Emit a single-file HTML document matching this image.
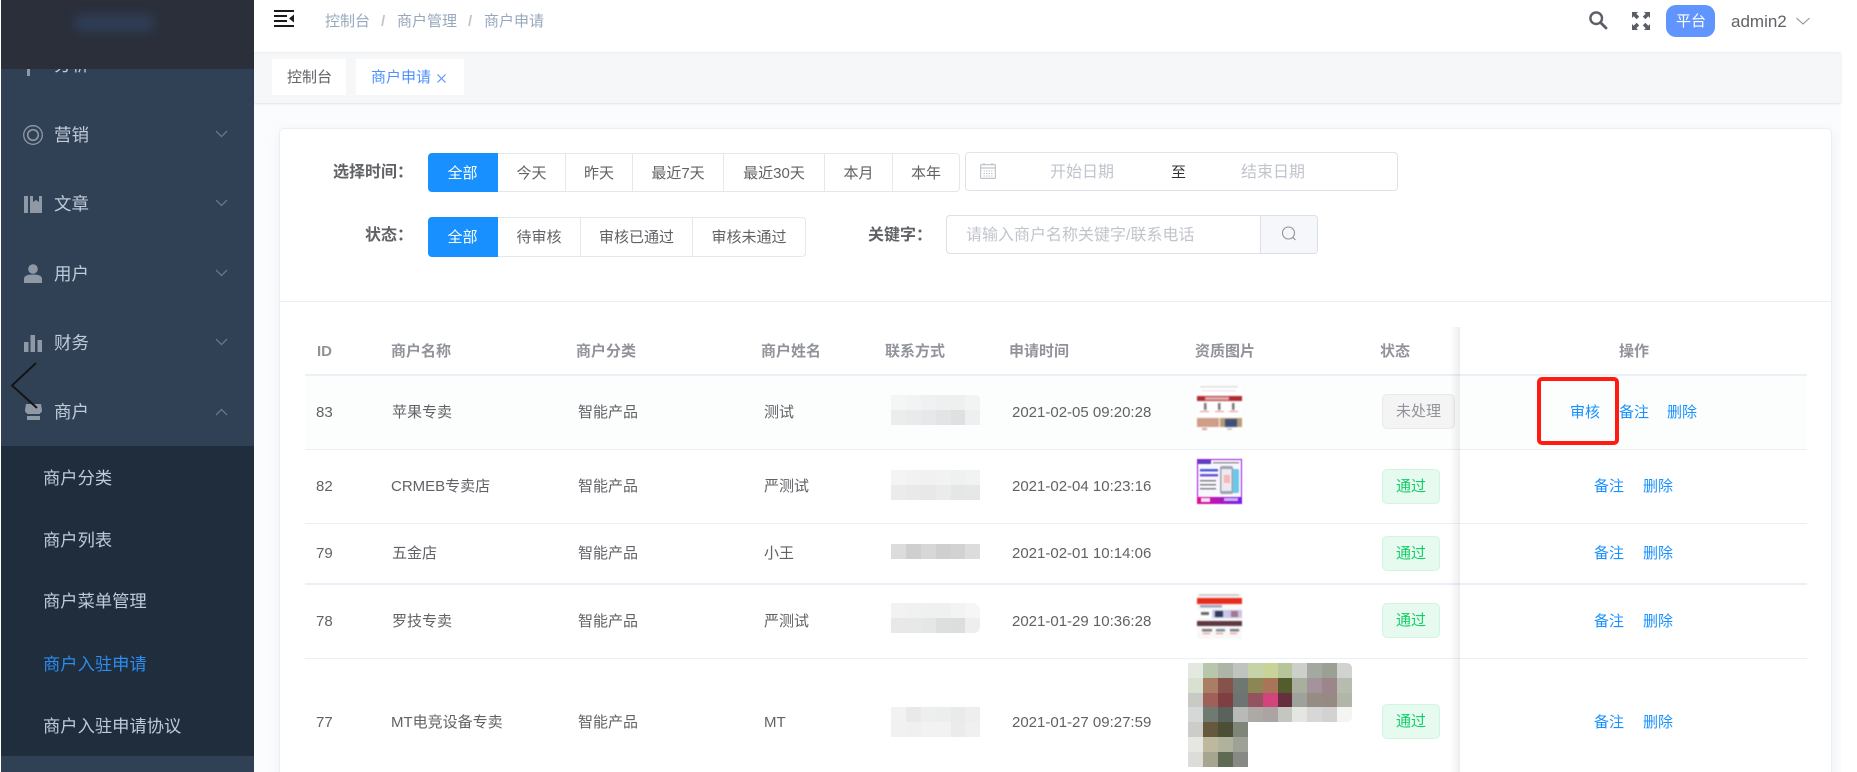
<!DOCTYPE html>
<html lang="zh-CN">
<head>
<meta charset="utf-8">
<title>商户申请</title>
<style>
*{box-sizing:border-box}
html,body{margin:0;padding:0;width:1857px;height:772px;overflow:hidden;background:#fff}
body{font-family:"Liberation Sans","Noto Sans CJK SC",sans-serif;position:relative;font-size:15px;color:#606266}
.a{position:absolute}
.t{position:absolute;white-space:nowrap;line-height:20px;height:20px;filter:blur(.3px)}
.side{left:1px;top:0;width:253px;height:772px;background:#304156;overflow:hidden}
.m{font-size:17.5px;color:#bfcbd9;left:53px}
.s{font-size:17.3px;color:#bfcbd9;left:42px}
.h{font-weight:bold;color:#909399;font-size:15px;top:342px}
.c{color:#606266;font-size:15px}
.line{position:absolute;left:305px;width:1502px;height:1px;background:#ebeff6}
.btn{position:absolute;border:1px solid #e4e7ed;background:#fff;color:#606266;text-align:center;font-size:15px;line-height:39px;height:39px;border-left:0;filter:blur(.2px)}
.act{background:#1890ff;color:#fff;border-color:#1890ff;border-radius:4px 0 0 4px}
.lb{font-weight:bold;color:#606266;font-size:16px}
.tag{position:absolute;border-radius:5px;font-size:15px;text-align:center;filter:blur(.2px)}
.g{background:#e7faf0;border:1px solid #d0f5e0;color:#13ce66;left:1382px;width:58px;height:35px;line-height:34px}
.l{color:#1890ff;font-size:15px}
svg{position:absolute;overflow:visible}
.mos rect{width:15px;height:15px}
</style>
</head>
<body>

<!-- Content background -->
<div class="a" style="left:254px;top:103px;width:1587px;height:669px;background:#fbfcfd"></div>

<!-- Sidebar -->
<div class="a side">
  <div class="t m" style="top:55px;left:53px">分析</div>
  <div class="a" style="left:26px;top:66px;width:3px;height:10px;background:#8f98a5"></div>

  <div class="t m" style="top:125px">营销</div>
  <div class="t m" style="top:194px">文章</div>
  <div class="t m" style="top:264px">用户</div>
  <div class="t m" style="top:333px">财务</div>
  <div class="t m" style="top:402px">商户</div>

  <svg style="left:0;top:0" width="253" height="772" viewBox="0 0 253 772">
    <g fill="none" stroke="#6d7c8e" stroke-width="1.2" transform="translate(0 1)">
      <path d="M215 130l5.500 5.500 5.500-5.500"/>
      <path d="M215 199l5.500 5.500 5.500-5.500"/>
      <path d="M215 269l5.500 5.500 5.500-5.500"/>
      <path d="M215 338l5.500 5.500 5.500-5.500"/>
      <path d="M215 414l5.500-5.500 5.500 5.500"/>
    </g>
    <g fill="none" stroke="#8f98a5">
      <circle cx="32" cy="135" r="9.300" stroke-width="1.300"/>
      <circle cx="32" cy="135" r="5.300" stroke-width="1.600"/>
    </g>
    <g fill="#8f98a5">
      <rect x="23" y="196" width="4" height="17"/>
      <path d="M29 196h3v6l3-2 3 2v-6h3v17H29z"/>
      <circle cx="32" cy="269" r="4.800"/>
      <path d="M23 283v-4c0-3 3-4.500 9-4.500s9 1.500 9 4.500v4z"/>
      <rect x="23" y="342" width="4.500" height="10"/>
      <rect x="29.500" y="335" width="4.500" height="17"/>
      <rect x="36.500" y="340" width="4.500" height="12"/>
      <path d="M25 404h15l1 6c0 2-1 3-2 3v7H26v-7c-1 0-2-1-2-3z"/>
    </g>
    <rect x="26" y="414" width="13" height="2" fill="#304156"/>
  </svg>

  <!-- submenu -->
  <div class="a" style="left:0;top:446px;width:253px;height:310px;background:#1f2d3d"></div>
  <div class="t s" style="top:468px">商户分类</div>
  <div class="t s" style="top:530px">商户列表</div>
  <div class="t s" style="top:591px">商户菜单管理</div>
  <div class="t s" style="top:654px;color:#2d8cf0">商户入驻申请</div>
  <div class="t s" style="top:716px">商户入驻申请协议</div>

  <!-- logo header -->
  <div class="a" style="left:0;top:0;width:253px;height:69px;background:#2a2f3a"></div>
  <div class="a" style="left:72px;top:14px;width:82px;height:18px;background:#2e3d54;filter:blur(5px);border-radius:8px"></div>
</div>

<!-- Top header -->
<div class="a" style="left:254px;top:0;width:1587px;height:52px;background:#fff"></div>
<svg style="left:274px;top:10px" width="20" height="17" viewBox="0 0 20 17">
  <g fill="#1a1a1a">
    <rect x="0" y="0" width="20" height="2"/>
    <rect x="0" y="5" width="13" height="2"/>
    <rect x="0" y="10" width="13" height="2"/>
    <rect x="0" y="15" width="20" height="2"/>
    <path d="M20 4.500v8l-5-4z"/>
  </g>
</svg>
<div class="t" style="left:325px;top:12px;color:#97a8be">控制台</div>
<div class="t" style="left:381px;top:12px;color:#c0c4cc;font-weight:bold">/</div>
<div class="t" style="left:397px;top:12px;color:#97a8be">商户管理</div>
<div class="t" style="left:468px;top:12px;color:#c0c4cc;font-weight:bold">/</div>
<div class="t" style="left:484px;top:12px;color:#97a8be">商户申请</div>

<svg style="left:1589px;top:11px" width="18" height="18" viewBox="0 0 18 18">
  <circle cx="7.200" cy="7.200" r="5.800" fill="none" stroke="#5a5e66" stroke-width="2.400"/>
  <path d="M11.500 11.500L17 17" stroke="#5a5e66" stroke-width="2.800" stroke-linecap="round"/>
</svg>
<svg style="left:1632px;top:12px" width="18" height="18" viewBox="0 0 18 18">
  <g fill="#5a5e66" stroke="none">
    <path d="M0 0h6L4.300 1.700l2.900 2.900-2.600 2.600-2.900-2.900L0 6z"/>
    <path d="M18 0h-6l1.700 1.700-2.900 2.900 2.600 2.600 2.900-2.900L18 6z"/>
    <path d="M0 18h6l-1.700-1.700 2.900-2.900-2.600-2.600-2.900 2.900L0 12z"/>
    <path d="M18 18h-6l1.700-1.700-2.900-2.900 2.600-2.600 2.900 2.900L18 12z"/>
  </g>
</svg>
<div class="a" style="left:1666px;top:5px;width:49px;height:32px;background:#6094ff;border-radius:10px"></div>
<div class="t" style="left:1676px;top:12px;color:#fff">平台</div>
<div class="t" style="left:1731px;top:12px;font-size:17px;color:#606266">admin2</div>
<svg style="left:1796px;top:17px" width="14" height="8" viewBox="0 0 14 8">
  <path d="M.5 1L7 7l6.500-6" fill="none" stroke="#909399" stroke-width="1.100"/>
</svg>

<!-- Tabs bar -->
<div class="a" style="left:254px;top:52px;width:1587px;height:51px;background:#f5f7f9;box-shadow:0 1px 2px rgba(0,0,0,.1),inset 0 2px 2px -1px rgba(0,0,0,.04)"></div>
<div class="a" style="left:272px;top:59px;width:74px;height:36px;background:#fff"></div>
<div class="t" style="left:287px;top:68px;color:#606266">控制台</div>
<div class="a" style="left:356px;top:59px;width:108px;height:36px;background:#fff"></div>
<div class="t" style="left:371px;top:68px;color:#4f8fff">商户申请</div>
<svg style="left:437px;top:74px" width="9" height="9" viewBox="0 0 9 9">
  <path d="M.5.5l8 8M8.500.5l-8 8" stroke="#4f8fff" stroke-width="1"/>
</svg>

<!-- Card -->
<div class="a" style="left:279px;top:128px;width:1553px;height:660px;background:#fff;border:1px solid #ebeef5;border-radius:5px;box-shadow:0 2px 12px rgba(0,0,0,.05)"></div>

<!-- Filters row 1 -->
<div class="t lb" style="left:333px;top:163px">选择时间：</div>
<div class="btn act" style="left:428px;top:153px;width:70px">全部</div>
<div class="btn" style="left:498px;top:153px;width:68px">今天</div>
<div class="btn" style="left:566px;top:153px;width:67px">昨天</div>
<div class="btn" style="left:633px;top:153px;width:91px">最近7天</div>
<div class="btn" style="left:724px;top:153px;width:101px">最近30天</div>
<div class="btn" style="left:825px;top:153px;width:68px">本月</div>
<div class="btn" style="left:893px;top:153px;width:67px;border-radius:0 4px 4px 0">本年</div>

<div class="a" style="left:965px;top:152px;width:433px;height:39px;border:1px solid #e0e3ea;border-radius:4px;background:#fff"></div>
<svg style="left:980px;top:163px" width="16" height="16" viewBox="0 0 16 16">
  <g fill="none" stroke="#c0c4cc" stroke-width="1.200">
    <rect x=".6" y="1.600" width="14.800" height="13.800" rx="1"/>
    <path d="M.6 5h14.800M4 0v2.500M12 0v2.500"/>
    <path d="M3.500 8h9M3.500 10.500h9M3.500 13h9" stroke-dasharray="1.500 1" stroke-width="1"/>
  </g>
</svg>
<div class="t" style="left:1050px;top:163px;font-size:16px;color:#c0c4cc">开始日期</div>
<div class="t" style="left:1171px;top:163px;color:#303133">至</div>
<div class="t" style="left:1241px;top:163px;font-size:16px;color:#c0c4cc">结束日期</div>

<!-- Filters row 2 -->
<div class="t lb" style="left:365px;top:226px">状态：</div>
<div class="btn act" style="left:428px;top:217px;width:70px;height:40px;line-height:39px">全部</div>
<div class="btn" style="left:498px;top:217px;width:83px;height:40px;line-height:39px">待审核</div>
<div class="btn" style="left:581px;top:217px;width:112px;height:40px;line-height:39px">审核已通过</div>
<div class="btn" style="left:693px;top:217px;width:113px;height:40px;line-height:39px;border-radius:0 4px 4px 0">审核未通过</div>

<div class="t lb" style="left:868px;top:226px">关键字：</div>
<div class="a" style="left:946px;top:215px;width:372px;height:39px;border:1px solid #dcdfe6;border-radius:4px;background:#fff"></div>
<div class="a" style="left:1260px;top:216px;width:57px;height:37px;background:#f5f7fa;border-left:1px solid #dcdfe6;border-radius:0 3px 3px 0"></div>
<div class="t" style="left:966px;top:226px;font-size:16px;color:#c0c4cc">请输入商户名称关键字/联系电话</div>
<svg style="left:1281px;top:226px" width="16" height="16" viewBox="0 0 16 16">
  <circle cx="7.500" cy="7" r="6" fill="none" stroke="#8f939a" stroke-width="1.100"/>
  <path d="M11.800 11.300l2.700 2.700" stroke="#8f939a" stroke-width="1.100"/>
</svg>

<div class="a" style="left:280px;top:301px;width:1551px;height:1px;background:#ebeef5"></div>

<!-- Table -->
<div class="a" style="left:305px;top:375px;width:1502px;height:74px;background:#fcfefe"></div>
<div class="t h" style="left:317px">ID</div>
<div class="t h" style="left:391px">商户名称</div>
<div class="t h" style="left:576px">商户分类</div>
<div class="t h" style="left:761px">商户姓名</div>
<div class="t h" style="left:885px">联系方式</div>
<div class="t h" style="left:1009px">申请时间</div>
<div class="t h" style="left:1195px">资质图片</div>
<div class="t h" style="left:1380px">状态</div>
<div class="t h" style="left:1619px">操作</div>

<div class="line" style="top:374px;height:2px"></div>
<div class="line" style="top:449px"></div>
<div class="line" style="top:523px"></div>
<div class="line" style="top:583px;height:2px"></div>
<div class="line" style="top:658px"></div>

<!-- Rows -->
<div class="t c" style="left:316px;top:403px">83</div>
<div class="t c" style="left:392px;top:403px">苹果专卖</div>
<div class="t c" style="left:578px;top:403px">智能产品</div>
<div class="t c" style="left:764px;top:403px">测试</div>
<div class="t c" style="left:1012px;top:403px">2021-02-05 09:20:28</div>

<div class="t c" style="left:316px;top:477px">82</div>
<div class="t c" style="left:391px;top:477px">CRMEB专卖店</div>
<div class="t c" style="left:578px;top:477px">智能产品</div>
<div class="t c" style="left:764px;top:477px">严测试</div>
<div class="t c" style="left:1012px;top:477px">2021-02-04 10:23:16</div>

<div class="t c" style="left:316px;top:544px">79</div>
<div class="t c" style="left:392px;top:544px">五金店</div>
<div class="t c" style="left:578px;top:544px">智能产品</div>
<div class="t c" style="left:764px;top:544px">小王</div>
<div class="t c" style="left:1012px;top:544px">2021-02-01 10:14:06</div>

<div class="t c" style="left:316px;top:612px">78</div>
<div class="t c" style="left:392px;top:612px">罗技专卖</div>
<div class="t c" style="left:578px;top:612px">智能产品</div>
<div class="t c" style="left:764px;top:612px">严测试</div>
<div class="t c" style="left:1012px;top:612px">2021-01-29 10:36:28</div>

<div class="t c" style="left:316px;top:713px">77</div>
<div class="t c" style="left:391px;top:713px">MT电竞设备专卖</div>
<div class="t c" style="left:578px;top:713px">智能产品</div>
<div class="t c" style="left:764px;top:713px">MT</div>
<div class="t c" style="left:1012px;top:713px">2021-01-27 09:27:59</div>

<!-- Blurred phone numbers -->
<svg class="mos" style="left:0;top:0" width="1857" height="772" viewBox="0 0 1857 772">
  <g>
    <rect x="891" y="395" fill="#f4f5f5"/><rect x="906" y="395" fill="#f2f3f3"/><rect x="921" y="395" fill="#f0f1f2"/><rect x="936" y="395" fill="#eef0f0"/><rect x="951" y="395" fill="#eef0f0"/><path d="M965 395h10q5 0 5 5v10h-15z" fill="#f2f3f3"/>
    <rect x="891" y="410" fill="#ebecec"/><rect x="906" y="410" fill="#e9eaeb"/><rect x="921" y="410" fill="#e7e8e9"/><rect x="936" y="410" fill="#e3e4e5"/><rect x="951" y="410" fill="#dfe0e1"/><rect x="965" y="410" fill="#eeeff0"/>

    <rect x="891" y="470" fill="#f4f4f5"/><rect x="906" y="470" fill="#f1f2f2"/><rect x="921" y="470" fill="#f1f1f2"/><rect x="936" y="470" fill="#f1f2f3"/><rect x="951" y="470" fill="#eff0f0"/><rect x="965" y="470" fill="#f1f2f2"/>
    <rect x="891" y="485" fill="#ebebeb"/><rect x="906" y="485" fill="#e9e9e9"/><rect x="921" y="485" fill="#e8e8e8"/><rect x="936" y="485" fill="#ebebeb"/><rect x="951" y="485" fill="#e5e6e6"/><rect x="965" y="485" fill="#e7e7e7"/>

    <rect x="891" y="544" fill="#dcdcdc"/><rect x="906" y="544" fill="#cfcfcf"/><rect x="921" y="544" fill="#d7d7d7"/><rect x="936" y="544" fill="#cfcfcf"/><rect x="951" y="544" fill="#d2d2d2"/><rect x="965" y="544" fill="#dcdcdc"/>

    <rect x="891" y="603" fill="#f2f2f3"/><rect x="906" y="603" fill="#f1f1f2"/><rect x="921" y="603" fill="#eff0f0"/><rect x="936" y="603" fill="#eff0f0"/><rect x="951" y="603" fill="#f3f3f4"/><path d="M965 603h6q9 0 9 9v6h-15z" fill="#f6f6f7"/>
    <rect x="891" y="618" fill="#e8e8e9"/><rect x="906" y="618" fill="#e7e8e8"/><rect x="921" y="618" fill="#e5e6e6"/><rect x="936" y="618" fill="#dddedf"/><rect x="951" y="618" fill="#dcdddd"/><path d="M965 618h15v7q0 8-6 8h-9z" fill="#eeeeef"/>

    <rect x="891" y="707" fill="#f2f2f3"/><rect x="906" y="707" fill="#e9e9ea"/><rect x="921" y="707" fill="#edeeee"/><rect x="936" y="707" fill="#ecedee"/><rect x="951" y="707" fill="#e9eaea"/><rect x="965" y="707" fill="#eeeeef"/>
    <rect x="891" y="722" fill="#f1f1f1"/><rect x="906" y="722" fill="#f0f0f0"/><rect x="921" y="722" fill="#f2f2f2"/><rect x="936" y="722" fill="#f2f2f2"/><rect x="951" y="722" fill="#ebebeb"/><rect x="965" y="722" fill="#f0f0f0"/>
  </g>

  <!-- Big mosaic -->
  <g>
    <rect x="1188" y="663" fill="#e3e8e0"/><rect x="1203" y="663" fill="#b8c6ab"/><rect x="1218" y="663" fill="#adb5a6"/><rect x="1233" y="663" fill="#c0c4bf"/><rect x="1248" y="663" fill="#c6d2a8"/><rect x="1263" y="663" fill="#c8d398"/><rect x="1278" y="663" fill="#b6c59a"/><rect x="1292" y="663" fill="#cccfca"/><rect x="1307" y="663" fill="#a3a8a0"/><rect x="1322" y="663" fill="#9aa194"/><path d="M1337 663h9q6 0 6 6v9h-15z" fill="#d0d3cf"/>
    <rect x="1188" y="678" fill="#d8e0d0"/><rect x="1203" y="678" fill="#a97e64"/><rect x="1218" y="678" fill="#86524c"/><rect x="1233" y="678" fill="#6e7770"/><rect x="1248" y="678" fill="#8c8655"/><rect x="1263" y="678" fill="#a87558"/><rect x="1278" y="678" fill="#535c2c"/><rect x="1292" y="678" fill="#a8af9c"/><rect x="1307" y="678" fill="#a4939a"/><rect x="1322" y="678" fill="#9c868c"/><rect x="1337" y="678" fill="#b6bcb0"/>
    <rect x="1188" y="693" fill="#c8cac6"/><rect x="1203" y="693" fill="#9e6058"/><rect x="1218" y="693" fill="#7f3e42"/><rect x="1233" y="693" fill="#6e7474"/><rect x="1248" y="693" fill="#94545f"/><rect x="1263" y="693" fill="#d2447c"/><rect x="1278" y="693" fill="#652f3d"/><rect x="1292" y="693" fill="#9da39a"/><rect x="1307" y="693" fill="#958d84"/><rect x="1322" y="693" fill="#968a82"/><rect x="1337" y="693" fill="#b2b6a8"/>
    <rect x="1188" y="707" fill="#d6d8d8"/><rect x="1203" y="707" fill="#6f7b72"/><rect x="1218" y="707" fill="#5a625e"/><rect x="1233" y="707" fill="#b8bab8"/><rect x="1248" y="707" fill="#ada9a5"/><rect x="1263" y="707" fill="#aaa4a3"/><rect x="1278" y="707" fill="#c6c6c0"/><rect x="1292" y="707" fill="#e4e6e2"/><rect x="1307" y="707" fill="#d6d7d6"/><rect x="1322" y="707" fill="#d2d3d0"/><path d="M1337 707h15v9q0 6-6 6h-9z" fill="#f4f4f2"/>
    <rect x="1188" y="722" fill="#cccdc8"/><rect x="1203" y="722" fill="#65583c"/><rect x="1218" y="722" fill="#4c4f36"/><rect x="1233" y="722" fill="#7f8578"/>
    <rect x="1188" y="737" fill="#e6e6e2"/><rect x="1203" y="737" fill="#bdb99e"/><rect x="1218" y="737" fill="#b0b29c"/><rect x="1233" y="737" fill="#9da196"/>
    <rect x="1188" y="752" fill="#dcddd8"/><rect x="1203" y="752" fill="#a5a590"/><rect x="1218" y="752" fill="#5f6a55"/><rect x="1233" y="752" fill="#878985"/>
  </g>
</svg>

<!-- Thumbnails -->
<svg style="left:1197px;top:385px;filter:blur(.7px)" width="45" height="45" viewBox="0 0 45 45">
  <rect width="45" height="45" fill="#fff"/>
  <rect x="3" y="1" width="38" height="1.500" fill="#ddd"/>
  <rect x="5" y="5" width="34" height="1.500" fill="#f0e8e8"/>
  <rect x="0" y="11" width="45" height="5" fill="#b02a32"/>
  <rect x="8" y="12" width="24" height="3" fill="#e0b0b0"/>
  <rect x="7" y="18" width="2.500" height="7" fill="#777"/>
  <rect x="21" y="18" width="2.500" height="7" fill="#777"/>
  <rect x="35" y="18" width="2.500" height="7" fill="#777"/>
  <rect x="3" y="26" width="9" height="1" fill="#ea8888"/><rect x="18" y="26" width="9" height="1" fill="#ea8888"/><rect x="32" y="26" width="9" height="1" fill="#ea8888"/>
  <rect x="0" y="33" width="22" height="9" fill="#cf9d88"/>
  <rect x="23" y="33" width="22" height="9" fill="#b89a78"/>
  <rect x="28" y="34" width="12" height="8" fill="#3f5078"/>
  <rect x="5" y="43" width="5" height="2" fill="#ea9999"/><rect x="30" y="43" width="5" height="2" fill="#ccc"/>
</svg>
<svg style="left:1197px;top:459px;filter:blur(.6px)" width="45" height="45" viewBox="0 0 45 45">
  <rect width="45" height="45" fill="#a415e4"/>
  <rect x="1" y="1" width="43" height="37" fill="#f8f6fe"/>
  <rect x="1" y="1" width="13" height="4" fill="#5c40c0"/>
  <rect x="16" y="3" width="26" height="1.500" fill="#999"/>
  <rect x="3" y="10" width="18" height="2.500" fill="#4c60e0"/>
  <rect x="3" y="15" width="18" height="2.500" fill="#7058d8"/>
  <rect x="3" y="21" width="16" height="1.500" fill="#888"/><rect x="3" y="25" width="16" height="1.500" fill="#888"/><rect x="3" y="29" width="16" height="1.500" fill="#888"/>
  <rect x="33" y="10" width="9" height="24" rx="2" fill="#6ac8ec"/>
  <rect x="23" y="7" width="13" height="28" rx="2" fill="#a0a6b0"/>
  <rect x="24.500" y="10" width="10" height="22" fill="#ece8f4"/>
  <rect x="27" y="16" width="6" height="8" fill="#f8b8b0"/>
  <defs><linearGradient id="tg" x1="0" x2="1" y1="0" y2="0"><stop offset="0" stop-color="#e4108c"/><stop offset="1" stop-color="#7a20f0"/></linearGradient></defs>
  <rect x="0" y="38" width="45" height="7" fill="url(#tg)"/>
  <rect x="4" y="39" width="9" height="4" fill="#f6e0f0"/>
  <rect x="27" y="39" width="14" height="3" fill="#c8b8f0"/>
</svg>
<svg style="left:1197px;top:594px;filter:blur(.7px)" width="45" height="45" viewBox="0 0 45 45">
  <rect width="45" height="45" fill="#f8f8f8"/>
  <rect x="2" y="0" width="40" height="2" fill="#ccc"/>
  <rect x="0" y="4" width="45" height="6" fill="#e82a1c"/>
  <rect x="3" y="11" width="22" height="2.500" fill="#9ca0c0"/>
  <rect x="0" y="16" width="15" height="8" fill="#fff"/>
  <rect x="4" y="18" width="8" height="3" fill="#666"/>
  <rect x="15" y="16" width="15" height="8" fill="#c8c8ec"/>
  <rect x="18" y="17" width="8" height="6" fill="#303858"/>
  <rect x="30" y="16" width="15" height="8" fill="#ccc4e4"/>
  <rect x="34" y="17" width="7" height="6" fill="#a07890"/>
  <rect x="0" y="27" width="45" height="5" fill="#5c3840"/>
  <rect x="5" y="35" width="10" height="2.500" fill="#777"/><rect x="19" y="35" width="9" height="2.500" fill="#7a8aa0"/><rect x="33" y="35" width="9" height="2.500" fill="#778"/>
  <rect x="6" y="39" width="7" height="1" fill="#f08070"/><rect x="19" y="39" width="7" height="1" fill="#f08070"/><rect x="33" y="39" width="7" height="1" fill="#f08070"/>
</svg>

<!-- Status tags -->
<div class="tag" style="left:1382px;top:394px;width:73px;height:35px;line-height:34px;background:#f4f4f5;border:1px solid #e9e9eb;color:#909399">未处理</div>
<div class="tag g" style="top:469px">通过</div>
<div class="tag g" style="top:536px">通过</div>
<div class="tag g" style="top:603px">通过</div>
<div class="tag g" style="top:704px">通过</div>

<!-- Fixed column shadow -->
<div class="a" style="left:1450px;top:327px;width:10px;height:445px;background:linear-gradient(to right,rgba(0,0,0,0),rgba(0,0,0,.07))"></div>

<!-- Actions -->
<div class="t l" style="left:1570px;top:403px">审核</div>
<div class="t l" style="left:1619px;top:403px">备注</div>
<div class="t l" style="left:1667px;top:403px">删除</div>
<div class="t l" style="left:1594px;top:477px">备注</div>
<div class="t l" style="left:1643px;top:477px">删除</div>
<div class="t l" style="left:1594px;top:544px">备注</div>
<div class="t l" style="left:1643px;top:544px">删除</div>
<div class="t l" style="left:1594px;top:612px">备注</div>
<div class="t l" style="left:1643px;top:612px">删除</div>
<div class="t l" style="left:1594px;top:713px">备注</div>
<div class="t l" style="left:1643px;top:713px">删除</div>

<!-- Annotations -->
<div class="a" style="left:1537px;top:377px;width:82px;height:68px;border:4px solid #ff1a12;border-radius:5px"></div>
<svg style="left:0;top:0" width="60" height="420" viewBox="0 0 60 420">
  <path d="M36 363L12 385.500L37 408" fill="none" stroke="#141414" stroke-width="2"/>
</svg>

</body>
</html>
